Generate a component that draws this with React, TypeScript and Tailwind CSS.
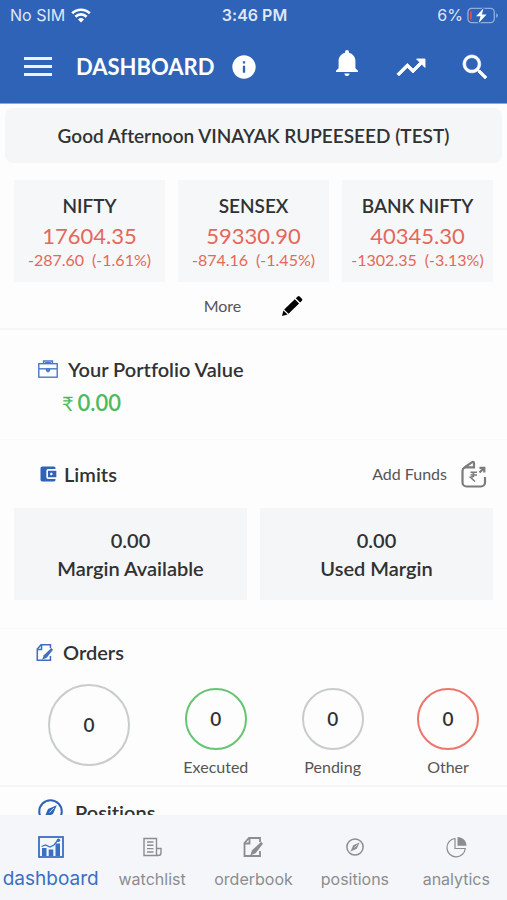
import type { ReactNode } from "react";
import { MdAccountBalanceWallet, MdInfo } from "react-icons/md";
import { IoMdNotifications, IoMdSearch, IoMdTrendingUp } from "react-icons/io";

const indices = [
  { name: "NIFTY", price: "17604.35", change: "-287.60", percent: "(-1.61%)" },
  { name: "SENSEX", price: "59330.90", change: "-874.16", percent: "(-1.45%)" },
  { name: "BANK NIFTY", price: "40345.30", change: "-1302.35", percent: "(-3.13%)" }
];

const margins = [
  { label: "Margin Available", value: "0.00" },
  { label: "Used Margin", value: "0.00" }
];

const orders = [
  { label: "Executed", count: 0, ring: "border-[#66c473]" },
  { label: "Pending", count: 0, ring: "border-[#c8cccc]" },
  { label: "Other", count: 0, ring: "border-[#ec766c]" }
];

function WifiIcon() {
  return (
    <svg viewBox="0 0 20 15" className="h-[15px] w-5" fill="none" stroke="currentColor" strokeWidth="2.6">
      <path d="M1.2 5.3a12.6 12.6 0 0 1 17.6 0" />
      <path d="M4.4 8.7a8 8 0 0 1 11.2 0" />
      <path d="M10 14.6l-3-3.1a4.3 4.3 0 0 1 6 0z" fill="currentColor" stroke="none" />
    </svg>
  );
}

function BatteryIcon() {
  return (
    <svg viewBox="0 0 34 18" className="h-[17px] w-8">
      <rect x="1" y="1.5" width="28" height="15" rx="4" fill="none" stroke="#8fadde" strokeWidth="1.4" />
      <path d="M31 6.5v5c1.2-.4 1.8-1.4 1.8-2.5s-.6-2.1-1.8-2.5z" fill="#8fadde" />
      <rect x="3.2" y="4.5" width="2" height="9" rx="1" fill="#e5484d" />
      <path d="M17.6 1.2L9.6 9.8h4.8l-2 7.2 8.4-9h-5z" fill="#fff" stroke="#2f63b8" strokeWidth="2.4" paintOrder="stroke" />
    </svg>
  );
}

function PencilIcon() {
  return (
    <svg viewBox="0 0 22 22" className="size-[22px]" fill="currentColor">
      <path d="M1 21l1.400-5.600 4.200 4.200z" />
      <path d="M3.200 14.400L13.800 4.300l4.300 4.200L7.500 18.700z" />
      <path d="M14.800 3.300l1.900-1.800a1.400 1.400 0 0 1 2 0l2.200 2.200a1.400 1.400 0 0 1 0 2l-1.800 1.800z" />
    </svg>
  );
}

function BriefcaseIcon() {
  return (
    <svg viewBox="0 0 20 18" className="mr-[10px] h-[18px] w-5 text-[#4a79c6]" fill="none" stroke="currentColor" strokeWidth="1.4">
      <path d="M5.500 3.700V1h9v2.700M7.500 3.700V2.600h5v1.100" />
      <rect x=".8" y="3.700" width="18.400" height="13.500" />
      <path d="M.8 8.800h18.400" />
      <path d="M7.800 8.800h4.400v2l-2.200 2-2.200-2z" fill="currentColor" stroke="none" />
    </svg>
  );
}

function NoteIcon({ className }: { className: string }) {
  return (
    <svg viewBox="0 0 20 20" className={className} fill="none" stroke="currentColor" strokeWidth="1.800">
      <path d="M17 5V1H6L1.500 6v13H17v-5" />
      <path d="M6.500 1v5.500h-5" />
      <path d="M18.200 4.800l1.800 2-7.400 9.400-5.400 2.200 1.900-5.200z" fill="currentColor" stroke="none" />
    </svg>
  );
}

function CompassIcon({ className }: { className: string }) {
  return (
    <svg viewBox="0 0 24 24" className={className} fill="none" stroke="currentColor" strokeWidth="2">
      <circle cx="12" cy="12" r="10.800" />
      <path d="M18 6l-3.600 8.400L6 18l3.600-8.400z" fill="currentColor" stroke="none" />
      <path d="M11 13l4.300-4.400" stroke="#fff" strokeWidth=".8" />
    </svg>
  );
}

function AddFundsIcon() {
  return (
    <svg viewBox="0 0 26 28" className="h-7 w-[26px] text-[#7b7b7b]" fill="none" stroke="currentColor" strokeWidth="2.200">
      <path d="M24 17v5.500a4 4 0 0 1-4 4H5.500a4 4 0 0 1-4-4V11a4 4 0 0 1 2-3.500l7.300-5.200c1.300-.9 2.200-.3 2.200.8v4.200H5c-1 0-1.800.2-2.500 1" />
      <path d="M18.500 12.500l4.300-4.300M18.500 7.800h4.800v4.800" />
      <path d="M9.500 12.300h6.500M9.500 15h6.500M9.500 12.300c4.500-.2 4.500 4.800 0 5l4.500 4.200" strokeWidth="1.500" />
    </svg>
  );
}

function DashboardIcon() {
  return (
    <svg viewBox="0 0 26 22" className="h-[22px] w-[26px]" fill="none" stroke="currentColor">
      <rect x="1" y="1" width="24" height="20" strokeWidth="1.800" />
      <path d="M4 12h4.500v8H4zM10.700 13.500h4.600v6.500h-4.600zM17.500 7.500H22V20h-4.500z" fill="currentColor" stroke="none" />
      <path d="M3.500 10.500l4-1.500 4.500 2L16 9l4-5" strokeWidth="1.300" />
      <circle cx="20.500" cy="4.300" r="1.700" fill="currentColor" stroke="none" />
    </svg>
  );
}

function WatchlistIcon() {
  return (
    <svg viewBox="0 0 20 20" className="h-5 w-5" fill="none" stroke="currentColor" strokeWidth="1.400">
      <path d="M14.500 11.500V1.500H2v17h14c1.800 0 3-1 3-2.500v-4.500h-4.500v5c0 1.200.6 2 1.500 2" />
      <path d="M5 5h6.500M5 8.300h6.500M5 11.600h6.500M5 15h6.500" />
    </svg>
  );
}

function AnalyticsIcon() {
  return (
    <svg viewBox="0 0 22 22" className="h-[22px] w-[22px]" fill="none" stroke="currentColor" strokeWidth="1.200">
      <path d="M10 2.500a9.200 9.200 0 1 0 10.300 10H10z" />
      <path d="M12.500 1v8.800h9c0-5-4-8.800-9-8.800z" fill="currentColor" stroke="none" />
    </svg>
  );
}

const tabs = [
  { label: "dashboard", icon: <DashboardIcon /> },
  { label: "watchlist", icon: <WatchlistIcon /> },
  { label: "orderbook", icon: <NoteIcon className="h-5 w-5" /> },
  { label: "positions", icon: <CompassIcon className="h-[18px] w-[18px]" /> },
  { label: "analytics", icon: <AnalyticsIcon /> }
];

function SectionTitle({ icon, children }: { icon: ReactNode; children: ReactNode }) {
  return (
    <h2 className="flex items-center text-xl leading-6 font-semibold">
      {icon}
      {children}
    </h2>
  );
}

function Header() {
  return (
    <header className="shrink-0 border-b border-[#8aa7da] bg-[#2f63b8] text-white">
      <div className="grid h-[30px] grid-cols-3 items-center pr-2 pl-[10px] font-['Inter',sans-serif] text-base text-[#dfe8f7]">
        <div className="flex items-center gap-[6px]">
          No SIM
          <span className="text-white"><WifiIcon /></span>
        </div>
        <p className="text-center font-semibold">3:46 PM</p>
        <div className="flex items-center justify-end gap-1">
          6%
          <BatteryIcon />
        </div>
      </div>
      <div className="flex h-[73px] items-center pr-4 pl-6">
        <button type="button" aria-label="Menu" className="flex w-7 flex-col gap-[5px]">
          <span className="h-[3px] w-full bg-[#eef3fb]" />
          <span className="h-[3px] w-full bg-[#eef3fb]" />
          <span className="h-[3px] w-full bg-[#eef3fb]" />
        </button>
        <h1 className="ml-6 text-[22px] font-bold">DASHBOARD</h1>
        <button type="button" aria-label="Info" className="ml-4">
          <MdInfo className="size-7" />
        </button>
        <div className="ml-auto flex items-center gap-8">
          <button type="button" aria-label="Notifications" className="pb-2">
            <IoMdNotifications className="size-8" />
          </button>
          <button type="button" aria-label="Market trends">
            <IoMdTrendingUp className="size-8 stroke-current [stroke-width:14px]" />
          </button>
          <button type="button" aria-label="Search">
            <IoMdSearch className="size-8 stroke-current [stroke-width:10px]" />
          </button>
        </div>
      </div>
    </header>
  );
}

export default function App() {
  return (
    <div className="flex h-screen flex-col bg-[#fdfdfd] font-['Lato',sans-serif] text-[#303234] [font-variant-ligatures:none]">
      <Header />
      <main className="min-h-0 flex-1 overflow-hidden">
        <section className="border-b-2 border-[#f5f6f6] pt-1">
          <p className="mx-[5px] rounded-lg bg-[#f5f6f7] pt-4 pb-[15px] text-center text-[19px] leading-6 font-semibold">
            Good Afternoon VINAYAK RUPEESEED (TEST)
          </p>
          <div className="mt-[17px] grid grid-cols-3 gap-[13px] px-[14px]">
            {indices.map((item) => (
              <article key={item.name} className="bg-[#f5f7f8] pt-[14px] pb-3 text-center whitespace-nowrap">
                <h2 className="text-[19px] leading-6 font-semibold">{item.name}</h2>
                <div className="text-[#e5675c]">
                  <p className="mt-1 text-[22px] leading-7">{item.price}</p>
                  <p className="flex justify-center gap-2 text-base leading-5">
                    <span>{item.change}</span>
                    <span>{item.percent}</span>
                  </p>
                </div>
              </article>
            ))}
          </div>
          <div className="flex h-[46px] items-center justify-center gap-10 pt-[2px] text-base text-[#555]">
            <button type="button">More</button>
            <button type="button" aria-label="Edit indices" className="text-black">
              <PencilIcon />
            </button>
          </div>
        </section>

        <section className="border-b border-[#f7f8f8] pt-[27px] pb-[22px] pl-[38px]">
          <SectionTitle icon={<BriefcaseIcon />}>Your Portfolio Value</SectionTitle>
          <p className="mt-2 flex gap-1 pl-6 text-[22px] leading-7 font-semibold text-[#4dbb5c]">
            <span className="text-xl leading-7 font-normal">₹</span>
            0.00
          </p>
        </section>

        <section className="border-b border-[#f7f8f8] px-[14px] pt-5 pb-7">
          <div className="flex items-center justify-between pr-[6px] pl-6">
            <SectionTitle icon={<MdAccountBalanceWallet className="mr-[6px] size-5 text-[#2f63b8]" />}>Limits</SectionTitle>
            <button type="button" className="flex items-center gap-[14px] text-base text-[#555]">
              Add Funds
              <AddFundsIcon />
            </button>
          </div>
          <div className="mt-5 grid grid-cols-2 gap-[13px]">
            {margins.map((item) => (
              <div key={item.label} className="bg-[#f5f6f8] py-[18px] text-center text-xl leading-7 font-semibold">
                <p>{item.value}</p>
                <p>{item.label}</p>
              </div>
            ))}
          </div>
        </section>

        <section className="border-b-2 border-[#f5f6f6] pt-[11px] pb-2">
          <div className="pl-9">
            <SectionTitle icon={<NoteIcon className="mr-[10px] size-[17px] text-[#3f6fc0]" />}>Orders</SectionTitle>
          </div>
          <div className="mt-5 flex items-start justify-between pr-7 pl-12">
            <p className="flex size-[82px] items-center justify-center rounded-full border-2 border-[#c8cccc] text-[19px] font-semibold">0</p>
            {orders.map((order) => (
              <div key={order.label} className="flex flex-col items-center pt-1">
                <p className={`flex size-[62px] items-center justify-center rounded-full border-2 text-[19px] font-semibold ${order.ring}`}>
                  {order.count}
                </p>
                <p className="mt-[7px] text-base leading-5 text-[#555]">{order.label}</p>
              </div>
            ))}
          </div>
        </section>

        <section className="pt-3 pl-[38px]">
          <SectionTitle icon={<CompassIcon className="mr-3 size-[25px] text-[#2f63b8]" />}>Positions</SectionTitle>
        </section>
      </main>

      <nav className="grid h-[85px] shrink-0 grid-cols-5 bg-[#f4f6fa] font-['Inter',sans-serif]">
        {tabs.map((tab, index) => (
          <a
            key={tab.label}
            href={`#${tab.label}`}
            className={`flex flex-col items-center pt-5 ${index === 0 ? "text-[19px] text-[#3a6fc4]" : "text-base text-[#8b8d90]"}`}
          >
            <span className="flex h-6 items-center">{tab.icon}</span>
            <span className="flex h-10 items-center">{tab.label}</span>
          </a>
        ))}
      </nav>
    </div>
  );
}
